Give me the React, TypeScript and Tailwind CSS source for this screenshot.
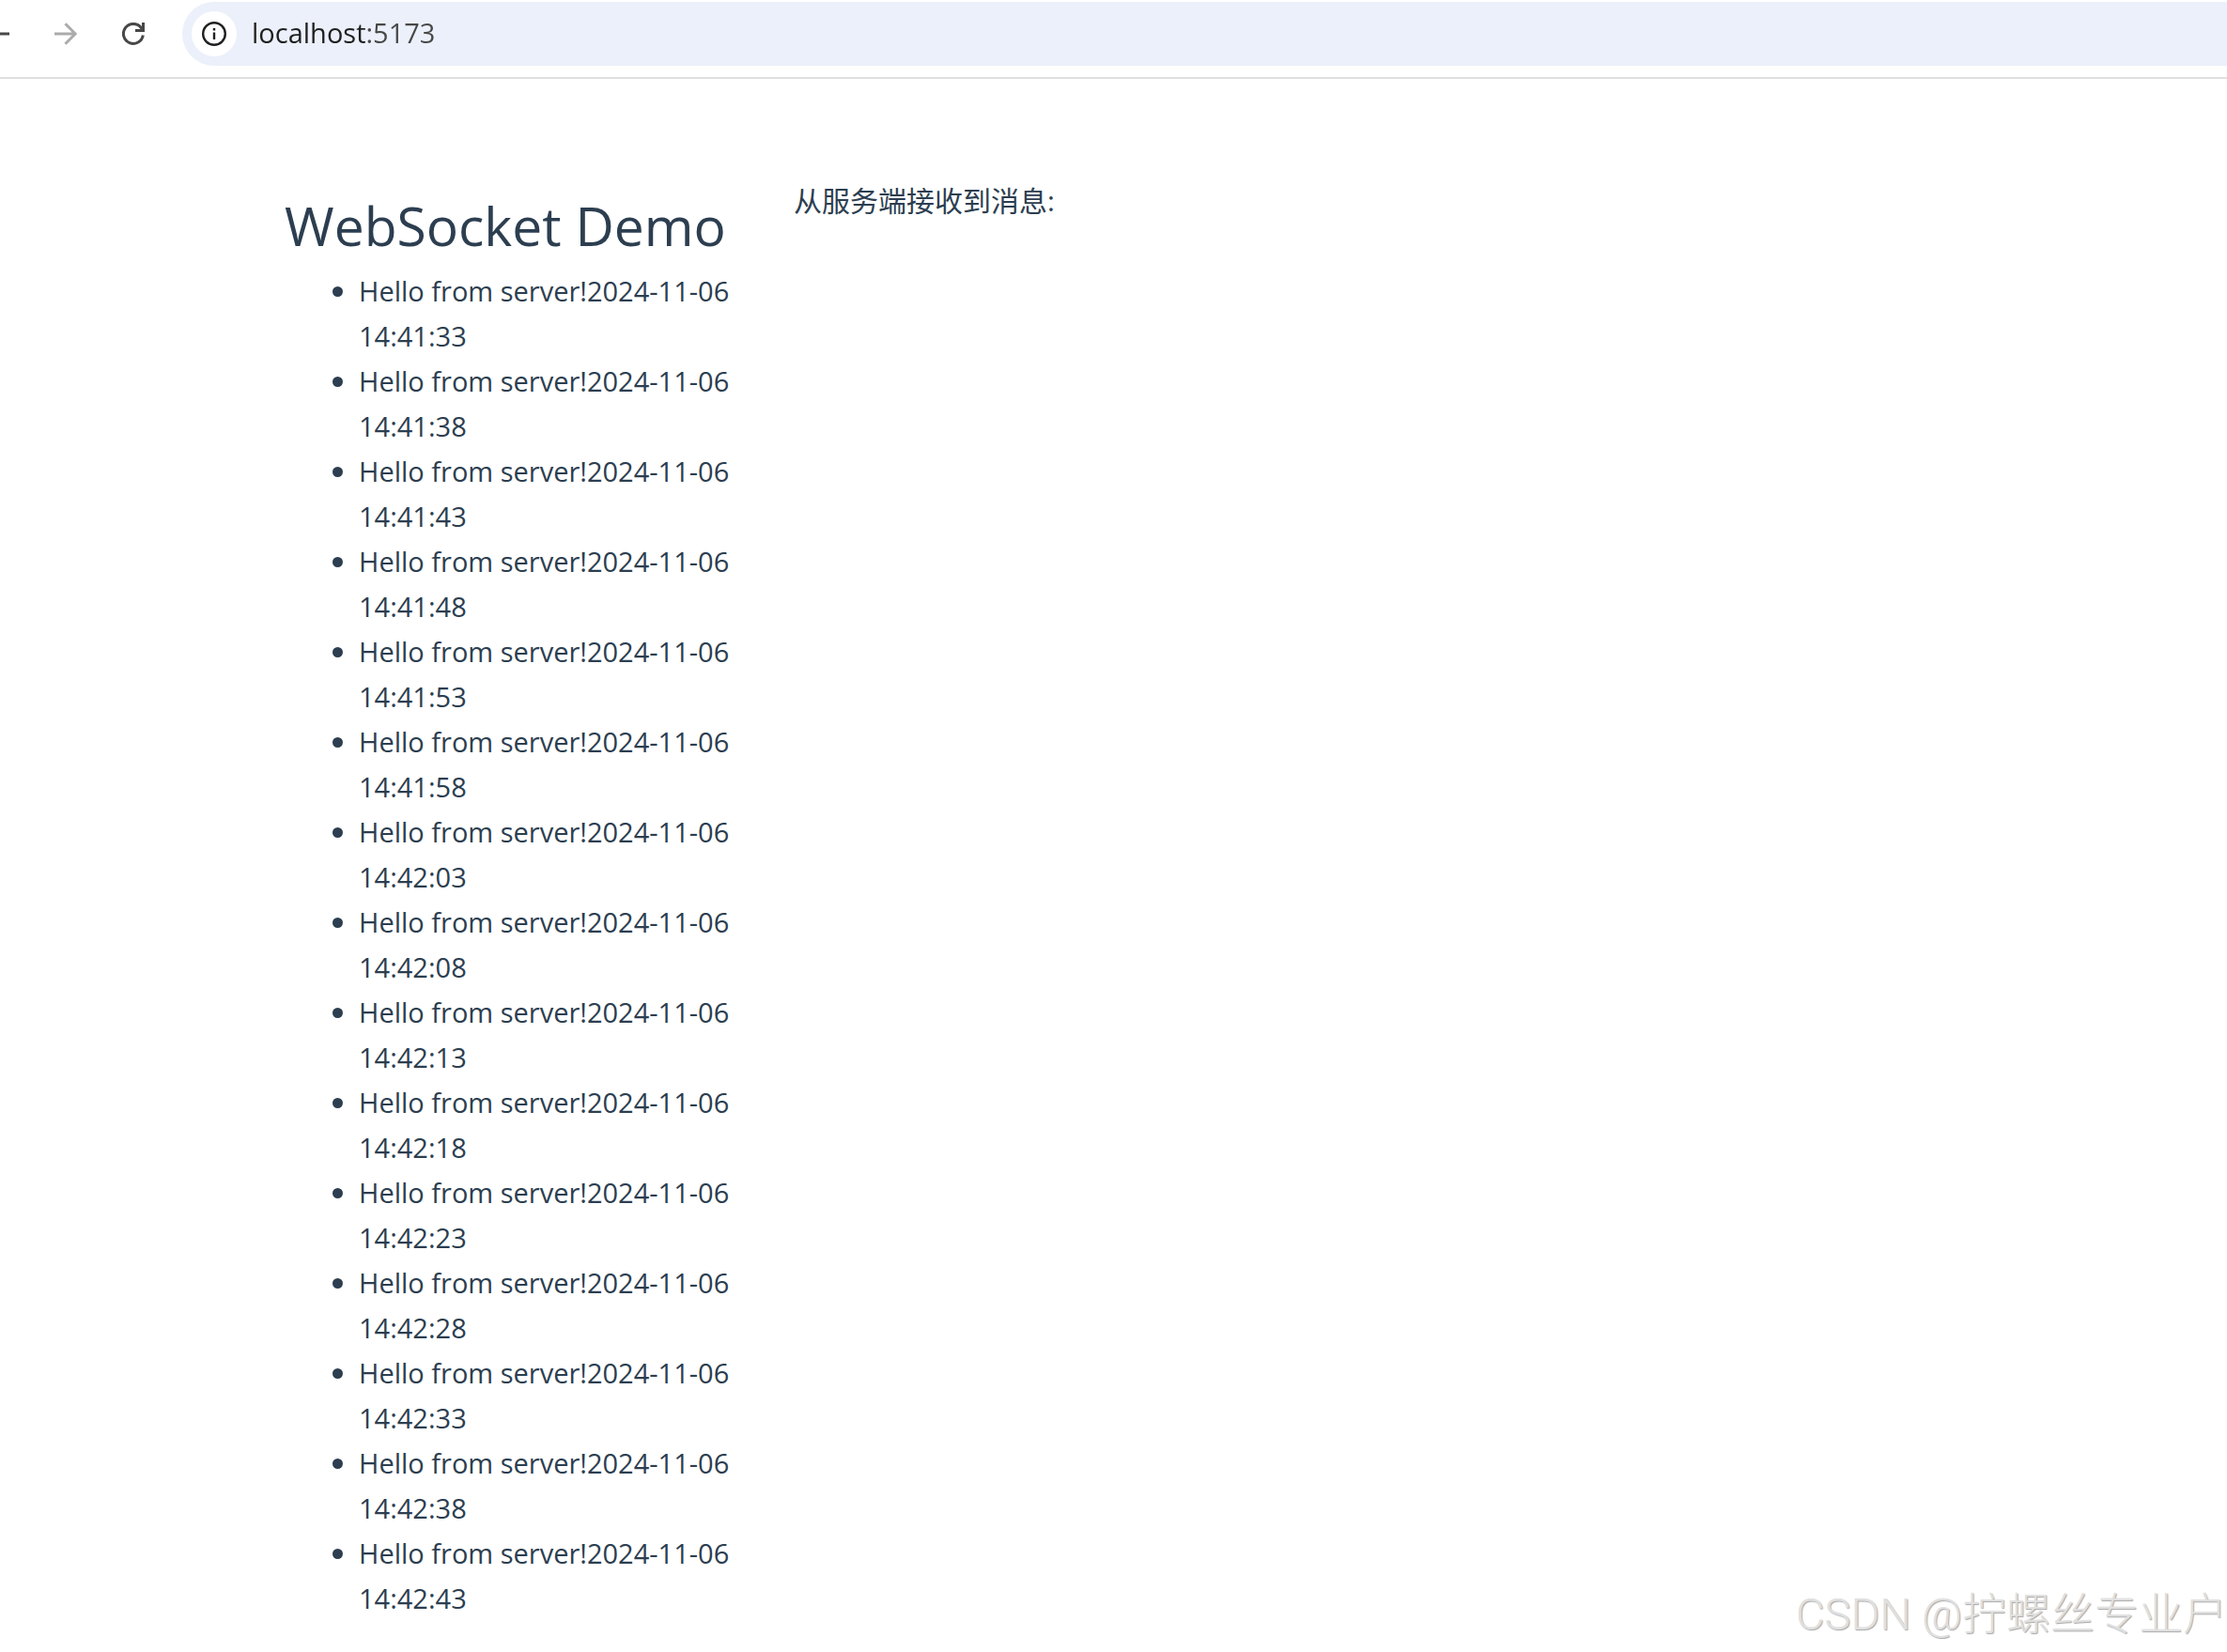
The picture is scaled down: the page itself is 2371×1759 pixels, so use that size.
import { useState } from 'react';

const messages = [
    'Hello from server!2024-11-06 14:41:33',
    'Hello from server!2024-11-06 14:41:38',
    'Hello from server!2024-11-06 14:41:43',
    'Hello from server!2024-11-06 14:41:48',
    'Hello from server!2024-11-06 14:41:53',
    'Hello from server!2024-11-06 14:41:58',
    'Hello from server!2024-11-06 14:42:03',
    'Hello from server!2024-11-06 14:42:08',
    'Hello from server!2024-11-06 14:42:13',
    'Hello from server!2024-11-06 14:42:18',
    'Hello from server!2024-11-06 14:42:23',
    'Hello from server!2024-11-06 14:42:28',
    'Hello from server!2024-11-06 14:42:33',
    'Hello from server!2024-11-06 14:42:38',
    'Hello from server!2024-11-06 14:42:43',
];

function BrowserBar() {
    const [url, setUrl] = useState('localhost:5173');

    return (
        <header className="flex items-start overflow-hidden border-b-2 border-[#e0e0e0] pt-0.5 pb-3">
            <nav className="flex h-17 shrink-0 items-center gap-12 pr-10">
                <button type="button" aria-label="Back" className="-ml-3.5 text-[#474747]">
                    <svg className="size-6" viewBox="0 0 24 24" fill="none" stroke="currentColor" strokeWidth="3">
                        <path d="M24 12H3M12.5 1.5L2 12l10.5 10.5" />
                    </svg>
                </button>
                <button type="button" aria-label="Forward" className="text-[#ababab]" disabled>
                    <svg className="size-6" viewBox="0 0 24 24" fill="none" stroke="currentColor" strokeWidth="3">
                        <path d="M0 12h21M11.5 1.2L22.2 12 11.5 22.8" />
                    </svg>
                </button>
                <button type="button" aria-label="Reload" className="text-[#474747]">
                    <svg className="size-6" viewBox="0 0 24 24" fill="none" stroke="currentColor" strokeWidth="3">
                        <path d="M22.3 13.5A10.5 10.5 0 1 1 20 5.2L22.5 8.5M22.5 0V8.5H14" />
                    </svg>
                </button>
            </nav>
            <div className="flex h-17 grow items-center rounded-l-full bg-[#ebf0fa] pl-2.5">
                <button
                    type="button"
                    aria-label="View site information"
                    className="flex size-12 shrink-0 items-center justify-center rounded-full bg-white text-[#1f1f1f]"
                >
                    <svg className="size-6.5" viewBox="0 0 26 26" fill="none" stroke="currentColor">
                        <circle cx="13" cy="13" r="11.8" strokeWidth="2.4" />
                        <path d="M13 11.5V19M13 7v2.4" strokeWidth="2.4" />
                    </svg>
                </button>
                <input
                    type="text"
                    aria-label="Address"
                    value={url}
                    onChange={(e) => setUrl(e.target.value)}
                    className="ml-4 grow bg-linear-to-r from-[#1f1f1f] from-[121px] to-[#474747] to-[121px] bg-clip-text pb-0.5 text-[29px] text-transparent caret-black outline-none"
                />
            </div>
        </header>
    );
}

export default function App() {
    return (
        <div className="relative min-h-screen bg-white font-['Open_Sans','Noto_Sans_CJK_SC',sans-serif] text-[#2c3e50]">
            <BrowserBar />
            <main className="flex items-start gap-16 px-[303px] pt-[106px] text-[29px] leading-[48px]">
                <section className="w-[478px] shrink-0 pt-3">
                    <h1 className="pb-2 text-[57px] leading-[76px] whitespace-nowrap">WebSocket Demo</h1>
                    <ul className="pl-[51px]">
                        {messages.map((message) => (
                            <li
                                key={message}
                                className="flex gap-[17px] before:mt-[19px] before:size-[11px] before:shrink-0 before:rounded-full before:bg-current"
                            >
                                {message}
                            </li>
                        ))}
                    </ul>
                </section>
                <section>
                    <p className="text-[30px]">从服务端接收到消息:</p>
                </section>
            </main>
            <div className="absolute right-0 bottom-3 font-['Roboto','Noto_Sans_CJK_SC',sans-serif] text-[47px] leading-[56px] font-light text-[#e0e0e0] [text-shadow:1px_1px_1px_#a8a8a8]">
                CSDN @拧螺丝专业户
            </div>
        </div>
    );
}
